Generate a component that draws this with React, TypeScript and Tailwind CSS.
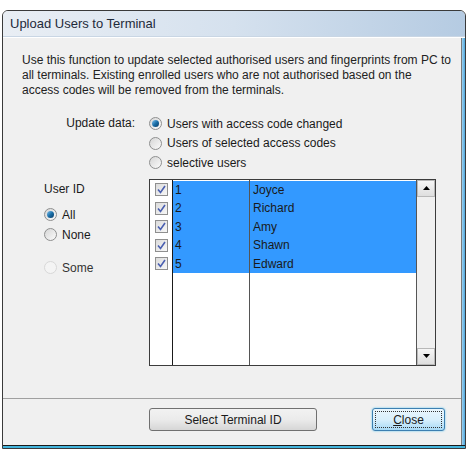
import React from "react";

const font = { fontFamily: '"Liberation Sans", Arial, sans-serif' };

function Radio({ checked = false, disabled = false }: { checked?: boolean; disabled?: boolean }) {
  return (
    <div
      className={
        "w-[13px] h-[13px] rounded-full border flex items-center justify-center shrink-0 " +
        (disabled
          ? "border-[#d8d8d8] bg-[#f4f4f4]"
          : "border-[#8e8f8f] bg-gradient-to-br from-[#d6d6d6] to-[#fbfbfb]")
      }
    >
      {checked && (
        <div className="w-[7px] h-[7px] rounded-full bg-gradient-to-br from-[#7bc4f0] via-[#1a6fa8] to-[#0d3d66]" />
      )}
    </div>
  );
}

function Check() {
  return (
    <div className="w-[13px] h-[13px] border border-[#8f8f8f] bg-gradient-to-br from-[#dcdcdc] to-[#f7f7f7] flex items-center justify-center">
      <svg width="9" height="9" viewBox="0 0 9 9">
        <path d="M1 4.5 L3.5 7.5 L8 1" fill="none" stroke="#4a5fb0" strokeWidth="1.6" />
      </svg>
    </div>
  );
}

const rows = [
  ["1", "Joyce"],
  ["2", "Richard"],
  ["3", "Amy"],
  ["4", "Shawn"],
  ["5", "Edward"],
];

export default function App() {
  return (
    <div className="w-[468px] h-[454px] bg-white text-[12px] text-[#1a1a1a]" style={font}>
      <div className="pt-[10px] pl-[2px]">
        <div className="w-[464px] h-[439px] flex flex-col rounded-t-[6px] border border-[#3a3a3a] overflow-hidden bg-[#eeeeee]">
          {/* title bar */}
          <div className="h-[26px] shrink-0 bg-gradient-to-r from-[#e9eef4] via-[#d5e1ee] to-[#b5cbe2] flex items-center pl-[7px] border-b border-[#c9d6e4]">
            <span className="text-[13px] text-[#1e2a3a] leading-none">Upload Users to Terminal</span>
          </div>
          <div className="flex-1 flex border-t border-white">
            <div className="flex-1 flex flex-col bg-[#f0f0f0] border-r border-[#7a7a7a]">
              {/* description */}
              <div className="pl-[19px] pr-[8px] pt-[15px] leading-[15px] text-[#222]">
                <p>Use this function to update selected authorised users and fingerprints from PC to</p>
                <p>all terminals. Existing enrolled users who are not authorised based on the</p>
                <p>access codes will be removed from the terminals.</p>
              </div>
              {/* update data */}
              <div className="flex mt-[16px]">
                <div className="w-[146px] text-right pr-[14px] leading-[19px]">Update data:</div>
                <div className="flex flex-col">
                  {[
                    ["Users with access code changed", true],
                    ["Users of selected access codes", false],
                    ["selective users", false],
                  ].map(([t, c]) => (
                    <div key={t as string} className="flex items-center gap-[5px] h-[19.5px]">
                      <Radio checked={c as boolean} />
                      <span>{t as string}</span>
                    </div>
                  ))}
                </div>
              </div>
              {/* user id + list */}
              <div className="flex mt-[6px]">
                <div className="w-[146px] pl-[41px] pt-[3px]">
                  <div className="leading-[14px]">User ID</div>
                  <div className="mt-[12px] flex items-center gap-[5px] h-[14px]">
                    <Radio checked />
                    <span>All</span>
                  </div>
                  <div className="mt-[6px] flex items-center gap-[5px] h-[14px]">
                    <Radio />
                    <span>None</span>
                  </div>
                  <div className="mt-[19px] flex items-center gap-[5px] h-[14px]">
                    <Radio disabled />
                    <span className="text-[#333]">Some</span>
                  </div>
                </div>
                <div className="w-[287px] h-[187px] border border-[#3c3c3c] bg-white flex">
                  <div className="flex-1 flex">
                    <div className="w-[23px] border-r border-[#1a1a1a] flex flex-col pt-[1px]">
                      {rows.map((r) => (
                        <div key={r[0]} className="h-[18.5px] flex items-center justify-center">
                          <Check />
                        </div>
                      ))}
                    </div>
                    <div className="w-[77px] border-r border-[#555] flex flex-col pt-[1px]">
                      {rows.map((r) => (
                        <div key={r[0]} className="h-[18.5px] bg-[#3399ff] pl-[2px] flex items-center">
                          {r[0]}
                        </div>
                      ))}
                    </div>
                    <div className="flex-1 flex flex-col pt-[1px]">
                      {rows.map((r) => (
                        <div key={r[0]} className="h-[18.5px] bg-[#3399ff] pl-[3px] flex items-center">
                          {r[1]}
                        </div>
                      ))}
                    </div>
                  </div>
                  {/* scrollbar */}
                  <div className="w-[19px] border-l border-[#555] bg-[#f0f0f0] flex flex-col justify-between">
                    <div className="h-[17px] border border-[#b8b8b8] bg-gradient-to-b from-[#f6f6f6] to-[#dedede] flex items-center justify-center">
                      <svg width="7" height="4" viewBox="0 0 7 4">
                        <path d="M0 4 L3.5 0 L7 4 Z" fill="#000" />
                      </svg>
                    </div>
                    <div className="h-[17px] border border-[#b8b8b8] bg-gradient-to-b from-[#f6f6f6] to-[#dedede] flex items-center justify-center">
                      <svg width="7" height="4" viewBox="0 0 7 4">
                        <path d="M0 0 L7 0 L3.5 4 Z" fill="#000" />
                      </svg>
                    </div>
                  </div>
                </div>
              </div>
              <div className="flex-1" />
              {/* separator */}
              <div className="h-[2px] border-t border-[#a0a0a0] border-b-white" />
              <div className="h-[45px] flex items-start pt-[8px]">
                <div className="ml-[146px] w-[168px] h-[23px] rounded-[3px] border border-[#707070] bg-gradient-to-b from-[#f2f2f2] via-[#ebebeb] to-[#d6d6d6] flex items-center justify-center">
                  Select Terminal ID
                </div>
                <div className="ml-[55px] w-[73px] h-[23px] rounded-[3px] border border-[#3c7fb1] bg-gradient-to-b from-[#eaf6fd] via-[#d9f0fc] to-[#a7d9f5] shadow-[0_0_2px_#4cc3f0] p-[2px]">
                  <div className="w-full h-full border border-dotted border-[#333] flex items-center justify-center">
                    <span><span className="underline">C</span>lose</span>
                  </div>
                </div>
              </div>
            </div>
            <div className="w-[3px] bg-gradient-to-r from-[#9fd1ef] to-[#4aa6db]" />
          </div>
          <div className="h-[3px] bg-[#43b4dc] border-t border-[#1a1a1a]" />
        </div>
      </div>
    </div>
  );
}
